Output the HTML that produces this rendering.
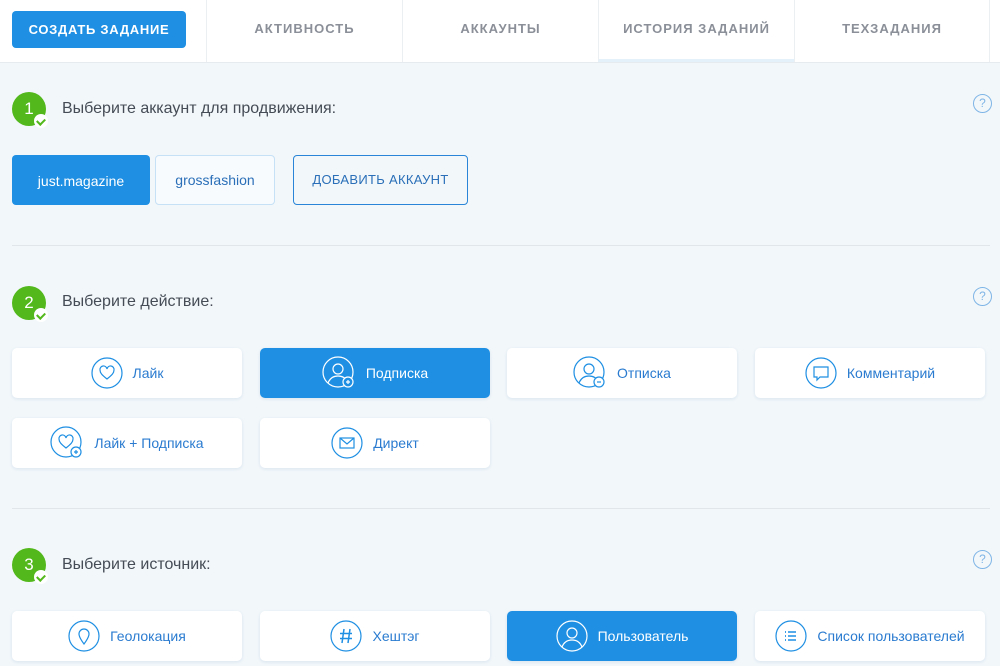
<!DOCTYPE html>
<html><head><meta charset="utf-8"><style>
*{margin:0;padding:0;box-sizing:border-box}
body{width:1000px;height:666px;overflow:hidden;background:#f2f7fa;font-family:"Liberation Sans",sans-serif;position:relative}
.hdr{position:absolute;left:0;top:0;width:1000px;height:63px;background:#fff;border-bottom:1px solid #e6ebef}
.tab{position:absolute;top:0;height:62px;line-height:58px;text-align:center;font-size:13px;font-weight:bold;letter-spacing:1px;color:#8a8f98;border-left:1px solid #eceff2}
.create{position:absolute;left:12px;top:11px;width:174px;height:37px;background:#1e8fe3;border-radius:4px;color:#fff;font-size:13px;font-weight:bold;letter-spacing:.7px;text-align:center;line-height:37px}
.num{position:absolute;left:12px;width:34px;height:34px;border-radius:50%;background:#52b81b;color:#fff;font-size:17px;text-align:center;line-height:34px}
.num i{position:absolute;left:22px;top:22px;width:14px;height:14px;border-radius:50%;background:#fff}
.num i:after{content:"";position:absolute;left:4px;top:3px;width:4px;height:6px;border:solid #52b81b;border-width:0 2px 2px 0;transform:rotate(45deg)}
.ttl{position:absolute;left:62px;font-size:16px;color:#454c55}
.help{position:absolute;left:973px;width:19px;height:19px;border:1px solid #7fb5e6;border-radius:50%;color:#7fb5e6;font-size:12px;text-align:center;line-height:17px}
.line{position:absolute;left:12px;width:978px;height:1px;background:#e1e6ea}
.acc{position:absolute;top:155px;height:50px;border-radius:4px;font-size:14px;text-align:center;line-height:48px}
.card{position:absolute;width:230px;height:50px;background:#fff;border-radius:5px;box-shadow:0 1px 3px rgba(30,100,160,.12);display:flex;align-items:center;justify-content:center;font-size:14px;color:#2a7bd0}
.card svg{margin-right:10px}
.card.on{background:#1e8fe3;color:#fff}
</style></head><body>
<div class="hdr">
<div class="create">СОЗДАТЬ ЗАДАНИЕ</div>
<div class="tab" style="left:206px;width:196px">АКТИВНОСТЬ</div>
<div class="tab" style="left:402px;width:196px">АККАУНТЫ</div>
<div class="tab" style="left:598px;width:196px;border-bottom:3px solid #e4f0fa">ИСТОРИЯ ЗАДАНИЙ</div>
<div class="tab" style="left:794px;width:196px;border-right:1px solid #eceff2">ТЕХЗАДАНИЯ</div>
</div>

<div class="num" style="top:92px">1<i></i></div>
<div class="ttl" style="top:100px">Выберите аккаунт для продвижения:</div>
<div class="help" style="top:94px">?</div>
<div class="acc" style="left:12px;width:138px;background:#1e8fe3;color:#fff;line-height:52px">just.magazine</div>
<div class="acc" style="left:155px;width:120px;background:#f8fbfe;border:1px solid #c6e0f5;color:#2a6fb8">grossfashion</div>
<div class="acc" style="left:293px;width:175px;border:1px solid #2a85d8;color:#2a6fb8;font-size:13px;letter-spacing:.3px">ДОБАВИТЬ АККАУНТ</div>
<div class="line" style="top:245px"></div>

<div class="num" style="top:286px">2<i></i></div>
<div class="ttl" style="top:293px">Выберите действие:</div>
<div class="help" style="top:287px">?</div>

<div class="card" style="left:12px;top:348px"><svg width="32" height="32" fill="none" stroke="#1e8fe3" stroke-width="1.2"><circle cx="16" cy="16" r="15"/><path d="M16 22c-5-4-7-6-7-9a3.5 3.5 0 0 1 7-1 3.5 3.5 0 0 1 7 1c0 3-2 5-7 9z"/></svg>Лайк</div>
<div class="card on" style="left:260px;top:348px"><svg width="34" height="34" fill="none" stroke="#fff" stroke-width="1.2"><circle cx="16" cy="16" r="15"/><circle cx="16" cy="13" r="5"/><path d="M6 27c2-5 6-7 10-7s8 2 10 7"/><circle cx="26" cy="26" r="5" fill="#1e8fe3"/><path d="M24 26h4M26 24v4"/></svg>Подписка</div>
<div class="card" style="left:507px;top:348px"><svg width="34" height="34" fill="none" stroke="#1e8fe3" stroke-width="1.2"><circle cx="16" cy="16" r="15"/><circle cx="16" cy="13" r="5"/><path d="M6 27c2-5 6-7 10-7s8 2 10 7"/><circle cx="26" cy="26" r="5" fill="#fff"/><path d="M24 26h4"/></svg>Отписка</div>
<div class="card" style="left:755px;top:348px"><svg width="32" height="32" fill="none" stroke="#1e8fe3" stroke-width="1.2"><circle cx="16" cy="16" r="15"/><path d="M9 10h14v10h-8l-3 3v-3h-3z"/></svg>Комментарий</div>
<div class="card" style="left:12px;top:418px"><svg width="34" height="34" fill="none" stroke="#1e8fe3" stroke-width="1.2"><circle cx="16" cy="16" r="15"/><path d="M16 22c-5-4-7-6-7-9a3.5 3.5 0 0 1 7-1 3.5 3.5 0 0 1 7 1c0 3-2 5-7 9z"/><circle cx="26" cy="26" r="5" fill="#fff"/><path d="M24 26h4M26 24v4"/></svg>Лайк + Подписка</div>
<div class="card" style="left:260px;top:418px"><svg width="32" height="32" fill="none" stroke="#1e8fe3" stroke-width="1.2"><circle cx="16" cy="16" r="15"/><rect x="9" y="11" width="14" height="10"/><path d="M9 11l7 6 7-6"/></svg>Директ</div>
<div class="line" style="top:508px"></div>

<div class="num" style="top:548px">3<i></i></div>
<div class="ttl" style="top:556px">Выберите источник:</div>
<div class="help" style="top:550px">?</div>

<div class="card" style="left:12px;top:611px"><svg width="32" height="32" fill="none" stroke="#1e8fe3" stroke-width="1.2"><circle cx="16" cy="16" r="15"/><path d="M16 24c-3-4-5-7-5-10a5 5 0 0 1 10 0c0 3-2 6-5 10z"/></svg>Геолокация</div>
<div class="card" style="left:260px;top:611px"><svg width="32" height="32" fill="none" stroke="#1e8fe3" stroke-width="1.2"><circle cx="16" cy="16" r="15"/><path d="M14 9l-2 14M20 9l-2 14M10 13.5h12M10 18.5h12" stroke-width="1.5"/></svg>Хештэг</div>
<div class="card on" style="left:507px;top:611px"><svg width="32" height="32" fill="none" stroke="#fff" stroke-width="1.2"><circle cx="16" cy="16" r="15"/><circle cx="16" cy="13" r="5"/><path d="M6 27c2-5 6-7 10-7s8 2 10 7"/></svg>Пользователь</div>
<div class="card" style="left:755px;top:611px"><svg width="32" height="32" fill="none" stroke="#1e8fe3" stroke-width="1.2"><circle cx="16" cy="16" r="15"/><path d="M13 12h8M13 16h8M13 20h8" stroke-width="1.5"/><path d="M10 12h1M10 16h1M10 20h1" stroke-width="1.8"/></svg>Список пользователей</div>
</body></html>
